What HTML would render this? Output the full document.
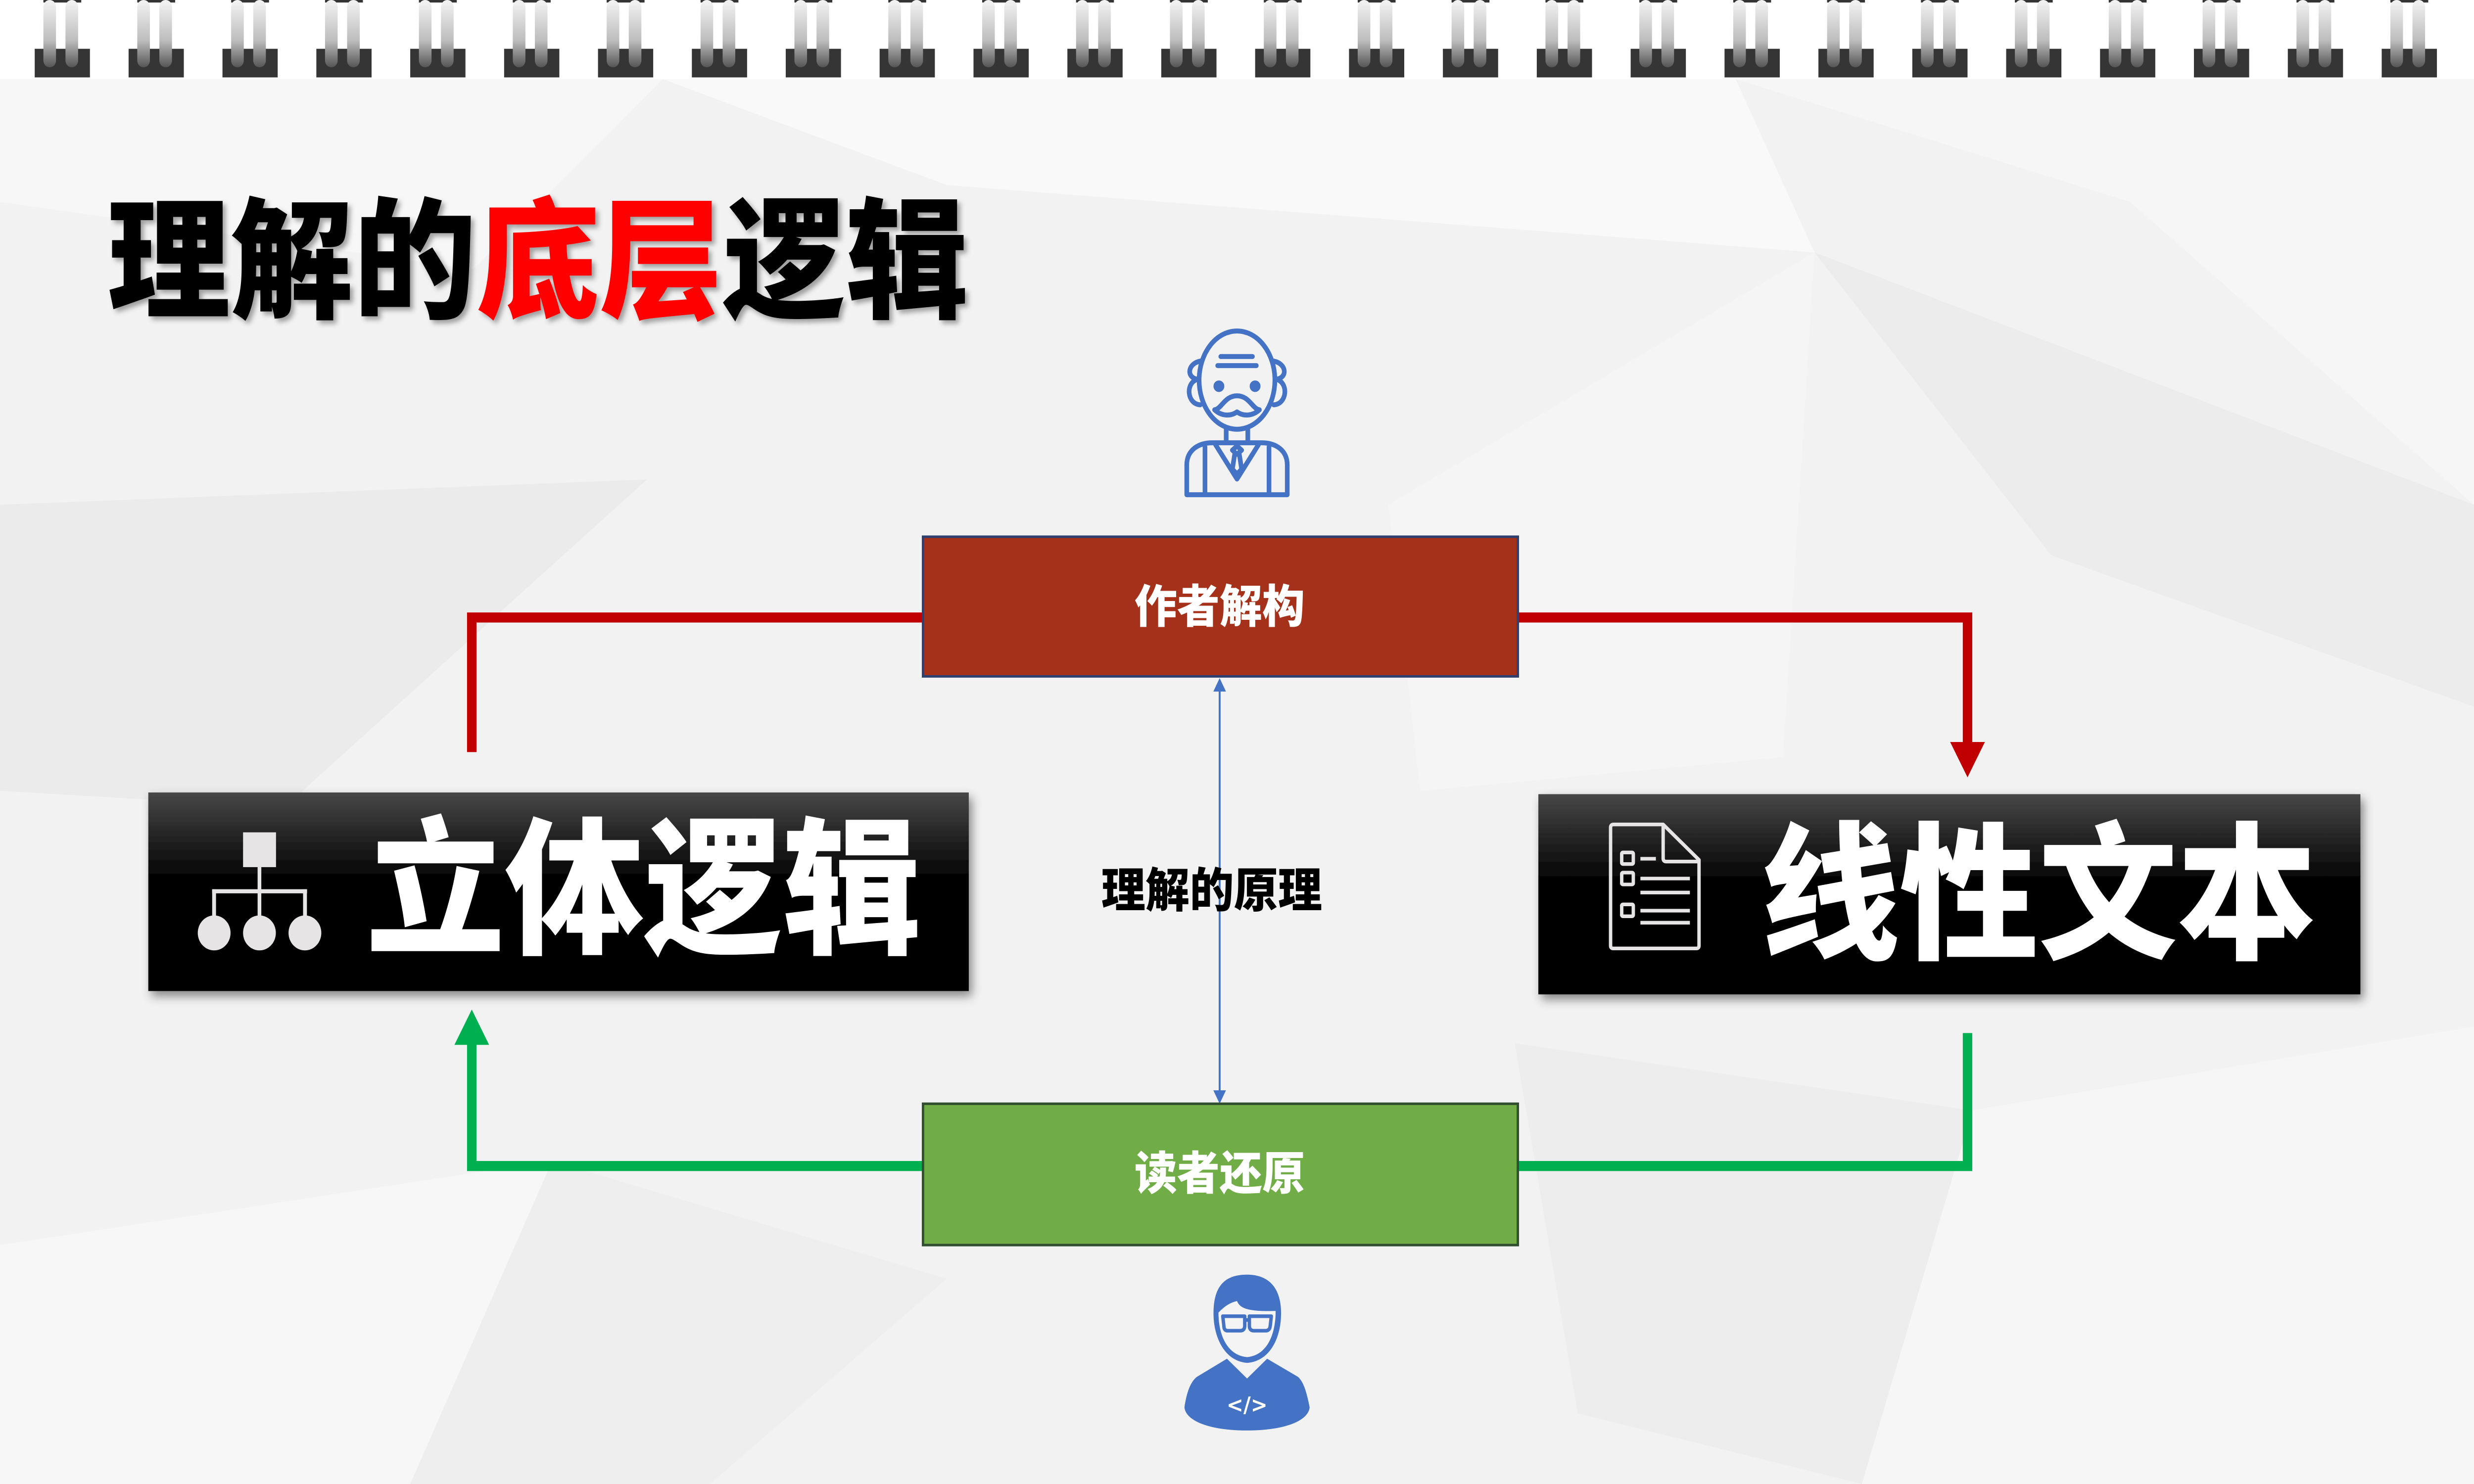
<!DOCTYPE html>
<html><head><meta charset="utf-8"><style>
html,body{margin:0;padding:0;background:#f3f3f3;overflow:hidden;width:100%;height:100%;}
svg{display:block;position:fixed;left:0;top:0;width:100vw;height:100vh;}
text{font-family:"Liberation Sans","Noto Sans CJK SC",sans-serif;font-weight:900;}
</style></head><body>
<svg viewBox="0 0 1568 882" preserveAspectRatio="none" xmlns="http://www.w3.org/2000/svg" xmlns:xlink="http://www.w3.org/1999/xlink">
<defs>
<linearGradient id="bk" x1="0" y1="0" x2="0" y2="1">
<stop offset="0" stop-color="#474747"/><stop offset="0.45" stop-color="#000"/><stop offset="1" stop-color="#000"/>
</linearGradient>
<linearGradient id="ring" x1="0" y1="0" x2="0" y2="1">
<stop offset="0" stop-color="#f4f4f4"/><stop offset="0.6" stop-color="#bdbdbd"/><stop offset="1" stop-color="#555"/>
</linearGradient>
<filter id="sh" x="-5%" y="-10%" width="110%" height="130%"><feDropShadow dx="2" dy="3" stdDeviation="3" flood-opacity="0.45"/></filter>
<filter id="tsh"><feDropShadow dx="2" dy="2" stdDeviation="1.5" flood-opacity="0.35"/></filter>
<g id="r">
<rect x="0" y="29" width="35" height="17" fill="#353535"/>
<rect x="5.5" y="0" width="24" height="1.5" fill="#353535"/>
<rect x="5.5" y="0" width="8" height="40" rx="4" fill="url(#ring)"/>
<rect x="19.5" y="0" width="8" height="40" rx="4" fill="url(#ring)"/>
</g>
</defs>
<rect width="1568" height="882" fill="#f2f2f2"/>
<rect width="1568" height="47" fill="#fff"/>
<polygon points="0,47 420,47 300,160 0,120" fill="#f7f7f7"/>
<polygon points="420,47 1100,47 1150,150 600,110" fill="#f9f9f9"/>
<polygon points="1100,47 1568,47 1568,300 1350,120" fill="#f6f6f6"/>
<polygon points="0,300 410,285 180,480 0,470" fill="#ebebeb"/>
<polygon points="1150,150 1568,300 1568,420 1300,330" fill="#ececec"/>
<polygon points="0,740 350,690 260,882 0,882" fill="#f7f7f7"/>
<polygon points="1250,660 1568,610 1568,882 1180,882" fill="#f6f6f6"/>
<polygon points="350,690 600,760 450,882 260,882" fill="#eeeeee"/>
<polygon points="880,300 1150,150 1130,450 900,470" fill="#f5f5f5"/>
<polygon points="960,620 1250,660 1180,882 1000,840" fill="#ededed"/>
<use xlink:href="#r" x="22"/><use xlink:href="#r" x="81.5"/><use xlink:href="#r" x="141"/><use xlink:href="#r" x="200.5"/><use xlink:href="#r" x="260"/><use xlink:href="#r" x="319.5"/><use xlink:href="#r" x="379"/><use xlink:href="#r" x="438.5"/><use xlink:href="#r" x="498"/><use xlink:href="#r" x="557.5"/><use xlink:href="#r" x="617"/><use xlink:href="#r" x="676.5"/><use xlink:href="#r" x="736"/><use xlink:href="#r" x="795.5"/><use xlink:href="#r" x="855"/><use xlink:href="#r" x="914.5"/><use xlink:href="#r" x="974"/><use xlink:href="#r" x="1033.5"/><use xlink:href="#r" x="1093"/><use xlink:href="#r" x="1152.5"/><use xlink:href="#r" x="1212"/><use xlink:href="#r" x="1271.5"/><use xlink:href="#r" x="1331"/><use xlink:href="#r" x="1390.5"/><use xlink:href="#r" x="1450"/><use xlink:href="#r" x="1509.5"/>
<text x="68" y="183" font-size="78" fill="#000" filter="url(#tsh)">理解的<tspan fill="#ff0000">底层</tspan>逻辑</text>
<g fill="none" stroke="#c00000" stroke-width="6">
<polyline points="586,367 299,367 299,447"/>
<polyline points="961,367 1247,367 1247,443"/>
</g>
<polygon points="1236,441 1258,441 1247,462" fill="#c00000"/>
<g fill="none" stroke="#00b050" stroke-width="6">
<polyline points="586,693 299,693 299,618"/>
<polyline points="961,693 1247,693 1247,614"/>
</g>
<polygon points="288,621 310,621 299,600" fill="#00b050"/>
<line x1="773" y1="408" x2="773" y2="651" stroke="#4472c4" stroke-width="1.2"/>
<polygon points="769,411 777,411 773,403" fill="#4472c4"/>
<polygon points="769,648 777,648 773,656" fill="#4472c4"/>
<rect x="585" y="319" width="377" height="83" fill="#a5311b" stroke="#2f3f6f" stroke-width="1.5"/>
<text x="773" y="370" font-size="27" fill="#fff" text-anchor="middle">作者解构</text>
<rect x="585" y="656" width="377" height="84" fill="#70ad47" stroke="#2f4f2f" stroke-width="1.5"/>
<text x="773" y="707" font-size="27" fill="#fff" text-anchor="middle">读者还原</text>
<text x="768" y="539" font-size="28" fill="#000" text-anchor="middle">理解的原理</text>
<rect x="94" y="471" width="520" height="118" fill="url(#bk)" filter="url(#sh)"/>
<text x="408" y="560" font-size="88" fill="#fff" text-anchor="middle">立体逻辑</text>
<rect x="975" y="472" width="521" height="119" fill="url(#bk)" filter="url(#sh)"/>
<text x="1292" y="563" font-size="88" fill="#fff" text-anchor="middle">线性文本</text>
<g transform="translate(88.2,464.6) scale(0.098)" fill="#e6e4e5">
<rect x="672" y="307" width="213" height="211"/>
<rect x="766" y="518" width="24" height="300"/>
<rect x="472" y="652" width="614" height="25"/>
<rect x="472" y="652" width="25" height="170"/>
<rect x="1060" y="652" width="25" height="170"/>
<circle cx="485" cy="917" r="106"/><circle cx="778" cy="917" r="106"/><circle cx="1072" cy="917" r="106"/>
</g>
<g transform="translate(999.7,470.4) scale(0.098)" fill="none" stroke="#e6e4e5" stroke-width="22" stroke-linejoin="round">
<path d="M235,200 H555 L787,415 V935 Q787,952 770,952 H232 Q215,952 215,935 V218 Q215,200 235,200 Z"/>
<path d="M555,205 V405 Q555,425 575,425 H782"/>
<rect x="287" y="370" width="75" height="70" rx="8"/>
<rect x="287" y="492" width="75" height="72" rx="8"/>
<rect x="287" y="685" width="75" height="72" rx="8"/>
<path d="M408,408 H508 M408,528 H728 M408,613 H728 M408,723 H728 M408,796 H728"/>
</g>
<g transform="translate(735,182.3) scale(0.098)" fill="none" stroke="#4472c4" stroke-width="30" stroke-linecap="round" stroke-linejoin="round">
<ellipse cx="500" cy="445" rx="245" ry="298"/>
<path d="M262,330 C180,345 170,430 245,440 C165,460 175,590 262,595"/>
<path d="M738,330 C820,345 830,430 755,440 C835,460 825,590 738,595"/>
<path d="M395,302 H600 M375,357 H625"/>
<path d="M355,625 C400,620 420,540 500,540 C580,540 600,620 645,625 C600,665 540,665 500,638 C460,665 400,665 355,625 Z"/>
<path d="M430,745 V815 M570,745 V815"/>
<path d="M175,1140 V960 C175,870 250,825 340,825 H660 C750,825 825,870 825,960 V1140 Z"/>
<path d="M293,850 V1135 M707,850 V1135"/>
<path d="M362,838 L500,1045 L638,838"/>
<path d="M500,845 L530,870 L500,895 L470,870 Z M485,895 L470,985 L500,1015 L530,985 L515,895"/>
<circle cx="383" cy="482" r="20" fill="#4472c4"/><circle cx="617" cy="482" r="20" fill="#4472c4"/>
</g>
<g transform="translate(735,746.8) scale(0.098)">
<path d="M348,345 C348,180 420,110 565,110 C715,110 785,200 785,345 C785,490 715,635 565,645 C420,635 348,490 348,345 Z" fill="#4472c4"/>
<path d="M380,340 C420,300 460,278 500,270 C520,315 570,335 750,330 C750,480 690,600 565,610 C440,600 380,480 380,340 Z" fill="#f4f4f4"/>
<g fill="none" stroke="#4472c4" stroke-width="22" stroke-linejoin="round">
<path d="M408,362 H550 V420 Q550,450 520,450 H440 Q415,450 415,420 Z"/>
<path d="M580,362 H722 L715,420 Q712,450 685,450 H610 Q580,450 580,420 Z"/>
<path d="M550,385 H580"/>
</g>
<path d="M160,915 C175,820 200,760 240,730 L435,620 L565,740 L695,620 L895,730 C930,760 950,820 970,915 C960,1000 800,1055 565,1055 C330,1055 170,1000 160,915 Z" fill="#4472c4"/>
<path d="M530,665 L565,740 L598,665 Z" fill="#f4f4f4"/>
<text x="565" y="945" font-size="130" fill="#fff" text-anchor="middle" style="font-family:'DejaVu Sans',sans-serif;font-weight:bold">&lt;/&gt;</text>
</g>
</svg>
</body></html>
